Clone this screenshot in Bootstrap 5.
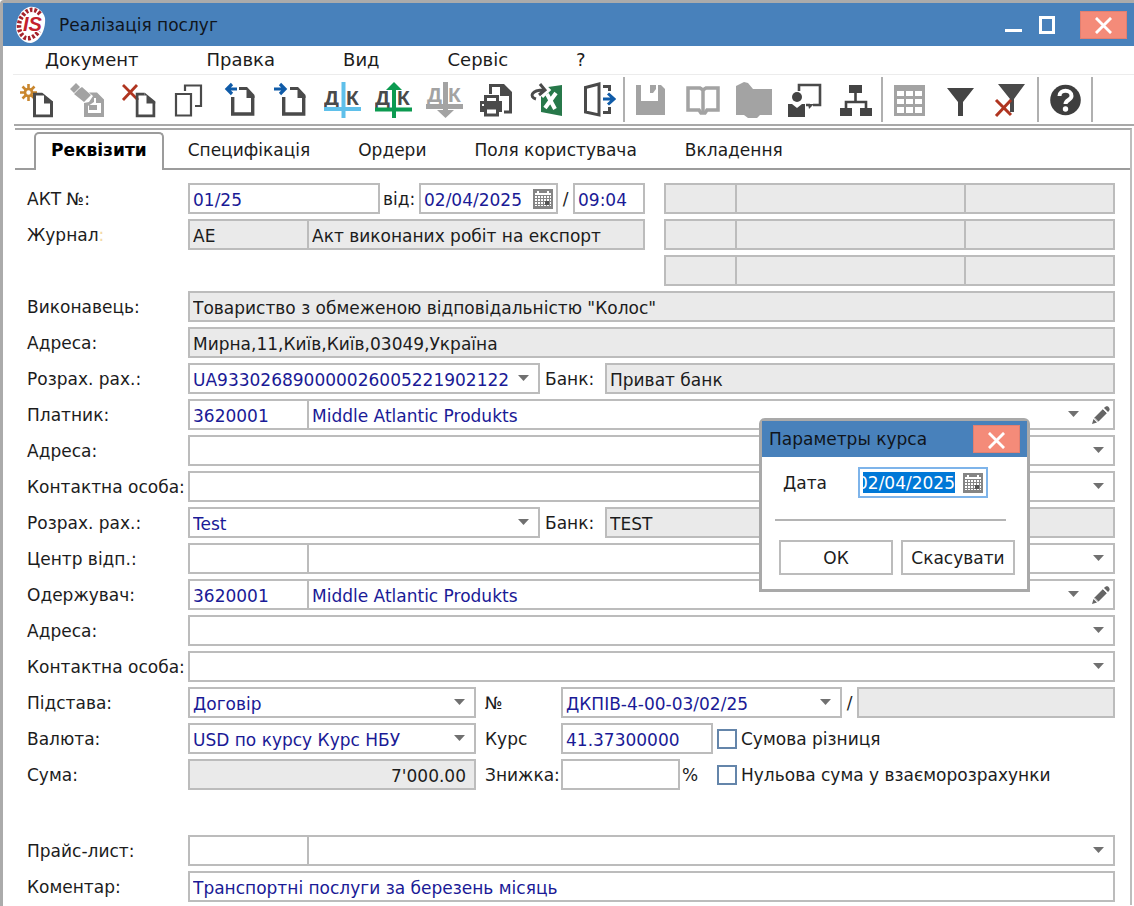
<!DOCTYPE html>
<html lang="uk">
<head>
<meta charset="utf-8">
<meta name="viewport" content="width=device-width, initial-scale=1">
<title>Реалізація послуг</title>
<link href="https://cdn.jsdelivr.net/npm/bootstrap@5.3.0/dist/css/bootstrap.min.css" rel="stylesheet">
<style>
:root { --line:#bcbcbc; --frame:#ababab; --bar:#4881bb; --ink:#1c1c1c; --entry:#1a1a96; --off:#eaeaea; }
body { font-family:"DejaVu Sans",Verdana,sans-serif; font-size:17px; line-height:20px; color:var(--ink); background:#fff; }
.win { border-left:3px solid var(--frame); border-top:3px solid var(--frame); border-top-left-radius:4px; }
.titlebar { background:var(--bar); height:43px; padding:0 7px 0 12px; color:#10151c; }
.winbtn { border:0; background:none; padding:0; width:34px; height:28px; color:#fff; }
.winclose { background:#f48b79; border:1px solid #e27f70; border-radius:0; width:47px; height:28px; padding:0; color:#fff; }
.menubar { height:29px; padding-left:32px; gap:68px; margin-left:10px; border-bottom:1px solid #ececec; font-size:18px; }
.menubar a, .tabstrip a { color:var(--ink); text-decoration:none; }
.tools { padding-left:8px; min-height:49px; }
.toolbtn { width:51px; height:46px; padding:0; border:0; background:none; border-radius:0; }
.toolbtn svg { display:block; margin:auto; }
.toolsep { width:3px; height:45px; border-left:2px solid #b0b0b0; }
.rule1 { height:2px; background:#a8a8a8; margin-left:11px; }
.panel { margin:2px 2px 0 12px; border-top:2px solid #a8a8a8; border-right:2px solid #bdbdbd; }
.tabstrip { height:40px; border-bottom:2px solid #9c9c9c; padding-left:19px; }
.tabstrip a { height:36px; padding:0 24px; }
.tabstrip a.on { font-weight:700; color:#000; border:2px solid #9c9c9c; border-bottom:0; border-radius:5px 5px 0 0; background:#fff; margin-bottom:-2px; height:38px; padding:0 15px 4px; }
.sheet { display:grid; row-gap:5px; padding:13px 15px 3px 12px; }
.line { display:flex; align-items:center; height:31px; min-width:0; }
.cap { flex:none; width:161px; white-space:nowrap; }
.fld { display:block; height:31px; min-width:0; border:2px solid var(--line); border-radius:0; background-color:#fff; color:var(--entry); padding:2px 3px 0 3px; font:inherit; line-height:20px; outline:0; }
.fld.off { background-color:var(--off); color:var(--ink); }
.second { margin-left:-2px; }
select.fld { appearance:none; padding-right:26px; background-repeat:no-repeat; background-position:right 9px center; background-image:url("data:image/svg+xml,%3Csvg xmlns='http://www.w3.org/2000/svg' width='11' height='7'%3E%3Cpath d='M0 0h11L5.500 6z' fill='%23707070'/%3E%3C/svg%3E"); }
select.fld.pen { background-position:right 34px center; padding-right:52px; }
.w-code { width:121px; flex:none; }
.w-num { width:192px; flex:none; } .w-date { width:139px; flex:none; } .w-time { width:72px; flex:none; }
.w-acc { width:352px; flex:none; } .w-base { width:288px; flex:none; } .w-doc { width:281px; flex:none; }
.w-rate { width:152px; flex:none; } .w-disc { width:119px; flex:none; } .w-left { width:457px; flex:none; }
.w-cell { width:73px; flex:none; } .w-end { width:151px; flex:none; }
.w-from { width:39px; padding-left:3px; white-space:nowrap; } .w-slash { width:15px; text-align:center; }
.triple { margin-left:19px; }
.faint { color:#f3d9a8; }
.c-bank { width:65px; padding-left:5px; } .c-mid { width:85px; padding-left:9px; }
.tail { width:37px; padding-left:2px; } .tail.none { width:4px; padding:0; }
.over { position:absolute; right:5px; top:50%; transform:translateY(-50%); border:0; background:none; padding:0; line-height:0; }
.tick { appearance:none; width:20px; height:20px; border:2px solid #6485aa; background:#fff; margin:0; flex:none; }
.dlg { position:absolute; top:415px; right:104px; width:271px; border:3px solid #a9a9a9; border-radius:6px 6px 0 0; background:#fff; z-index:5; }
.dlg-head { background:var(--bar); height:36px; padding:0 7px; color:#10151c; }
.dlg-body { padding:10px 12px 14px 13px; }
.dlg-row { padding:0 27px 0 8px; }
.dlg .pick { width:130px; border-color:#7eb4ea; padding:3px 31px 3px 3px; background:#0078d7 content-box; color:#fff; }
.pickbox { background:#fff; width:130px; }
.dlg-hr { border:0; border-top:2px solid #b4b4b4; opacity:1; margin:21px 9px 19px 0; }
.dlgbtn { width:114px; height:35px; border:2px solid var(--line); border-radius:0; background:#fff; color:var(--ink); padding:0; }
</style>
</head>
<body>
<svg width="0" height="0" class="d-none">
  <symbol id="cal" viewBox="0 0 20 20"><path fill="#858585" d="M0 0h20v20H0z"/><path fill="#fff" d="M3 4h1V2h2v2h8V2h2v2h2v2H2V4zM2 7h16v10H2z"/><path stroke="#858585" d="M2 9.500h16M2 12.500h16M2 15.500h16M4.500 7v10M7.500 7v10M10.500 7v10M13.500 7v10M16.500 7v10"/><path fill="#555" d="M12 12h4v4h-4z"/></symbol>
  <symbol id="pencil" viewBox="0 0 18 18"><path fill="#666" d="M11 3l4 4-9 9-4-4zM12 2c2-2.500 4-2 5-.5s1 3-1 4.500zM1.500 13l3.500 3.500L0 18z"/><path stroke="#fff" stroke-width=".8" d="M11 3l4 4M2.500 12l4 4"/></symbol>
  <symbol id="cross" viewBox="0 0 18 18"><path stroke="#fff" stroke-width="3" d="M1 1l16 16M17 1L1 17"/></symbol>
  <symbol id="page" viewBox="0 0 20 25"><path fill="none" stroke="currentColor" stroke-width="3" d="M9 1.500H1.500v22h17V9"/><path fill="currentColor" d="M9 0l11 9v2h-9V3H9z"/></symbol>
</svg>

<div class="win position-relative min-vh-100">
  <header class="titlebar d-flex align-items-center">
    <svg width="32" height="38" viewBox="0 0 32 38" aria-hidden="true" class="flex-shrink-0">
      <path fill="#fff" d="M14 1C22 0 28 5 30 12C31 22 26 35 16 37C7 37 1 29 1 21C2 10 7 3 14 1z"/>
      <path fill="none" stroke="#a5222b" stroke-width="4.500" stroke-dasharray="2.600 1.800" d="M25 8C21 3 14 2 9 8C3 14 2 24 8 30C12 35 20 31 24 25"/>
      <text x="8" y="25" font-family="Liberation Sans, Arial, sans-serif" font-weight="700" font-style="italic" font-size="20" fill="#c4202c" stroke="#fff" stroke-width="2" paint-order="stroke">IS</text>
    </svg>
    <span class="ms-2 me-auto ps-1">Реалізація послуг</span>
    <button class="winbtn" aria-label="Згорнути"><svg width="18" height="28"><path fill="#fff" d="M1 18h17v3H1z"/></svg></button>
    <button class="winbtn me-3" aria-label="Розгорнути"><svg width="18" height="20" viewBox="0 0 18 20"><path fill="none" stroke="#fff" stroke-width="3" d="M2.500 2.500h13v15h-13z"/></svg></button>
    <button class="winclose" aria-label="Закрити"><svg width="17" height="17"><use href="#cross"/></svg></button>
  </header>

  <nav class="menubar d-flex align-items-center">
    <a href="#">Документ</a><a href="#">Правка</a><a href="#">Вид</a><a href="#">Сервіс</a><a href="#">?</a>
  </nav>

  <div class="tools d-flex flex-wrap align-items-center" role="toolbar">
    <button class="toolbtn" aria-label="Створити"><svg width="37" height="36" viewBox="0 0 37 36" color="#4a4a4a"><g stroke="#c9872f" stroke-width="2.600" fill="none"><circle cx="10.500" cy="10.500" r="3.500"/><path d="M10.500 2v5M10.500 14v5M2 10.500h5M14 10.500h5M4.500 4.500l3.500 3.500M13 13l3.500 3.500M16.500 4.500L13 8M8 13l-3.500 3.500"/></g><use href="#page" x="15" y="10.500" width="20" height="25"/></svg></button>
    <button class="toolbtn" aria-label="Змінити"><svg width="37" height="36" viewBox="0 0 37 36"><path fill="#a3a3a3" d="M7 1l4 4-6 6-4-4zM10 7l3-2 9 8-7 7L5 12zM20 10.500h8l7 7v17.500H15V21l5-1 4-6z"/><path fill="#fff" d="M19 24l6-4v-4h2v5h5v10H19z"/><path fill="#a3a3a3" d="M20 23h8v5h-8z"/></svg></button>
    <button class="toolbtn" aria-label="Видалити"><svg width="37" height="36" viewBox="0 0 37 36" color="#4a4a4a"><path stroke="#b03520" stroke-width="2.800" d="M3 18L17 3M3 3l15 15"/><use href="#page" x="15.500" y="10.500" width="20" height="25"/></svg></button>
    <button class="toolbtn" aria-label="Копіювати"><svg width="37" height="36" viewBox="0 0 37 36" fill="none" stroke="#4a4a4a" stroke-width="2.200"><path d="M5 12h15v21.500H5zM14 9V3.500h16V24h-6"/></svg></button>
    <button class="toolbtn" aria-label="Попередній"><svg width="37" height="36" viewBox="0 0 37 36" color="#4a4a4a"><path fill="none" stroke="currentColor" stroke-width="3.400" d="M10.700 15v17h20V14"/><path fill="currentColor" d="M17 5h8l7.500 8v3h-8V8H17z"/><path fill="none" stroke="#0f5ba8" stroke-width="3.200" d="M15 7H6M10 2L5 7l5 5"/></svg></button>
    <button class="toolbtn" aria-label="Наступний"><svg width="37" height="36" viewBox="0 0 37 36" color="#4a4a4a"><path fill="none" stroke="currentColor" stroke-width="3.400" d="M10.700 15v17h20V14"/><path fill="currentColor" d="M17 5h8l7.500 8v3h-8V8H17z"/><path fill="none" stroke="#0f5ba8" stroke-width="3.200" d="M1 7h10M7 2l5 5-5 5"/></svg></button>
    <button class="toolbtn" aria-label="Проводка"><svg width="37" height="36" viewBox="0 0 37 36" font-family="Liberation Sans, Arial, sans-serif" font-weight="700" font-size="21" fill="#4a4a4a"><text x="0" y="23">Д</text><text x="22" y="23">К</text><path stroke="#5fc0ea" stroke-width="4" d="M19.500 0v36M0 27h37"/></svg></button>
    <button class="toolbtn" aria-label="Провести"><svg width="37" height="36" viewBox="0 0 37 36" font-family="Liberation Sans, Arial, sans-serif" font-weight="700" font-size="21" fill="#4a4a4a"><text x="0" y="23">Д</text><text x="22" y="23">К</text><path stroke="#0c9a50" stroke-width="4" d="M19 3v33M0 27.500h37"/><path fill="#0c9a50" d="M19 0l8 8H11z"/></svg></button>
    <button class="toolbtn" aria-label="Відкликати"><svg width="37" height="36" viewBox="0 0 37 36" font-family="Liberation Sans, Arial, sans-serif" font-weight="700" font-size="21" fill="#a3a3a3"><text x="1" y="20">Д</text><text x="22" y="20">К</text><path stroke="#a3a3a3" stroke-width="5" d="M19.500 0v30M0 24.500h37"/><path fill="#a3a3a3" d="M11 28h17l-8.500 8z"/></svg></button>
    <button class="toolbtn" aria-label="Друк"><svg width="37" height="36" viewBox="0 0 37 36"><path fill="none" stroke="#4a4a4a" stroke-width="3" d="M13.500 12V3.500H25M33.500 12v18H27"/><path fill="#4a4a4a" d="M23 2h4l8 8v4H23zM3 19h22v11H3z"/><path fill="#fff" stroke="#4a4a4a" stroke-width="3" d="M8.500 14.500h12v6h-12zM8.500 26h12v7h-12z"/><path fill="#fff" d="M5 22h2v2H5z"/></svg></button>
    <button class="toolbtn" aria-label="Експорт в Excel"><svg width="37" height="36" viewBox="0 0 37 36"><path fill="#27784a" d="M13 6l21-3v31l-21-4z"/><path fill="none" stroke="#fff" stroke-width="4" d="M19 12l8 15M28 11L17 26"/><path fill="none" stroke="#fff" stroke-width="6" d="M8 17C1 12 6 8 16 8M13 2l6 6-6 6"/><path fill="none" stroke="#4a4a4a" stroke-width="3" d="M8 17C1 15 3 8 16 8M12 2l5 6-6 5"/></svg></button>
    <button class="toolbtn" aria-label="Вийти"><svg width="37" height="36" viewBox="0 0 37 36" fill="none" stroke="#4a4a4a" stroke-width="3"><path d="M6.500 5.500L20 2v31L6.500 30zM24 4.500h6.500V9M30.500 25v5.500H24"/><path stroke="#0f5ba8" d="M24 17h10M29 11.500l6 5.500-6 5.500"/></svg></button>
    <span class="toolsep"></span>
    <button class="toolbtn" aria-label="Зберегти"><svg width="37" height="36" viewBox="0 0 37 36"><path fill="#a3a3a3" d="M3 3h5v16h17V3h3l4 4v26H3z"/><path fill="#a3a3a3" d="M17 3h6v4l-3 4h-3z"/></svg></button>
    <button class="toolbtn" aria-label="Довідник"><svg width="37" height="36" viewBox="0 0 37 36"><path fill="#fff" stroke="#a3a3a3" stroke-width="3.500" d="M4 6h12l3 2 3-2h12v22H23l-2 3h-4l-2-3H4z"/><path stroke="#a3a3a3" stroke-width="3.500" d="M19 7v24"/></svg></button>
    <button class="toolbtn" aria-label="Папка"><svg width="37" height="36" viewBox="0 0 37 36"><path fill="#a3a3a3" d="M1 4l8-4 4 1 5 6h19v26H25l-3 3h-9l-4-3H1z"/></svg></button>
    <button class="toolbtn" aria-label="Контакти"><svg width="37" height="36" viewBox="0 0 37 36"><path fill="none" stroke="#4a4a4a" stroke-width="2.600" d="M13 9V3h21v20h-7M20 23h4"/><path fill="#4a4a4a" d="M22 22h6l-5 5z"/><circle cx="11" cy="15" r="5" fill="#444"/><path fill="#444" d="M2 22h4l5 4 5-4h3v13H2z"/></svg></button>
    <button class="toolbtn" aria-label="Структура"><svg width="37" height="36" viewBox="0 0 37 36"><path fill="#444" d="M12 3h13v8H12zM3 26h12v8H3zM23 26h12v8H23z"/><path fill="none" stroke="#444" stroke-width="2.600" d="M18.500 10v9M9 27v-7h20v7"/></svg></button>
    <span class="toolsep"></span>
    <button class="toolbtn" aria-label="Таблиця"><svg width="37" height="36" viewBox="0 0 37 36"><path fill="#a3a3a3" d="M3 3h31v31H3z"/><path fill="#fff" d="M6 9h7v5H6zM15 9h7v5h-7zM24 9h7v5h-7zM6 17h7v5H6zM15 17h7v5h-7zM24 17h7v5h-7zM6 25h7v6H6zM15 25h7v6h-7zM24 25h7v6h-7z"/></svg></button>
    <button class="toolbtn" aria-label="Фільтр"><svg width="37" height="36" viewBox="0 0 37 36"><path fill="#444" d="M5 6h27L21 20v14h-5V20z"/></svg></button>
    <button class="toolbtn" aria-label="Скинути фільтр"><svg width="37" height="36" viewBox="0 0 37 36"><path fill="#4a4a4a" d="M5 2h27L21 17v13h-4V17z"/><path stroke="#b03520" stroke-width="3" d="M3 34l15-16M3 18l15 15"/></svg></button>
    <span class="toolsep"></span>
    <button class="toolbtn" aria-label="Довідка"><svg width="37" height="36" viewBox="0 0 37 36"><circle cx="18.500" cy="18" r="15.300" fill="#3e3e3e"/><path fill="none" stroke="#fff" stroke-width="4" d="M12.500 14c0-7 12-7 12 0 0 4-6 4-6 8"/><circle cx="18.500" cy="27" r="2.700" fill="#fff"/></svg></button>
    <span class="toolsep"></span>
  </div>
  <div class="rule1"></div>

  <main class="panel">
    <nav class="tabstrip d-flex align-items-end">
      <a href="#" class="on d-flex align-items-center">Реквізити</a>
      <a href="#" class="d-flex align-items-center">Специфікація</a>
      <a href="#" class="d-flex align-items-center">Ордери</a>
      <a href="#" class="d-flex align-items-center">Поля користувача</a>
      <a href="#" class="d-flex align-items-center">Вкладення</a>
    </nav>

    <form class="sheet">
      <div class="line"><label class="cap" for="num">АКТ №:</label><input id="num" class="fld w-num" value="01/25">
        <label class="w-from" for="dat">від:</label>
        <span class="position-relative"><input id="dat" class="fld w-date" value="02/04/2025"><button type="button" class="over" aria-label="Календар"><svg width="20" height="20"><use href="#cal"/></svg></button></span>
        <label for="tim" class="w-slash">/</label><input id="tim" class="fld w-time" value="09:04">
        <span class="d-flex flex-fill triple"><input class="fld off w-cell" readonly aria-label="Поле 1"><input class="fld off second flex-fill" readonly aria-label="Поле 2"><input class="fld off second w-end" readonly aria-label="Поле 3"></span>
      </div>
      <div class="line"><label class="cap" for="jr">Журнал<span class="faint">:</span></label><span class="d-flex w-left"><input id="jr" class="fld off w-code" readonly value="АЕ"><input class="fld off second flex-fill" readonly value="Акт виконаних робіт на експорт" aria-label="Назва журналу"></span>
        <span class="d-flex flex-fill triple"><input class="fld off w-cell" readonly aria-label="Поле 4"><input class="fld off second flex-fill" readonly aria-label="Поле 5"><input class="fld off second w-end" readonly aria-label="Поле 6"></span>
      </div>
      <div class="line"><span class="cap"></span><span class="w-left"></span>
        <span class="d-flex flex-fill triple"><input class="fld off w-cell" readonly aria-label="Поле 7"><input class="fld off second flex-fill" readonly aria-label="Поле 8"><input class="fld off second w-end" readonly aria-label="Поле 9"></span>
      </div>
      <div class="line"><label class="cap" for="vik">Виконавець:</label><input id="vik" class="fld off flex-fill" readonly value='Товариство з обмеженою відповідальністю "Колос"'></div>
      <div class="line"><label class="cap" for="adr">Адреса:</label><input id="adr" class="fld off flex-fill" readonly value="Мирна,11,Київ,Київ,03049,Україна"></div>
      <div class="line"><label class="cap" for="rr">Розрах. рах.:</label><select id="rr" class="fld w-acc"><option>UA933026890000026005221902122</option></select><label class="cap c-bank" for="bk">Банк:</label><input id="bk" class="fld off flex-fill" readonly value="Приват банк"></div>
      <div class="line"><label class="cap" for="pl">Платник:</label><input id="pl" class="fld w-code" value="3620001"><span class="position-relative flex-fill second"><select class="fld pen w-100" aria-label="Назва платника"><option>Middle Atlantic Produkts</option></select><button type="button" class="over" aria-label="Редагувати"><svg width="18" height="18"><use href="#pencil"/></svg></button></span></div>
      <div class="line"><label class="cap" for="ad2">Адреса:</label><select id="ad2" class="fld flex-fill"><option></option></select></div>
      <div class="line"><label class="cap" for="ko1">Контактна особа:</label><select id="ko1" class="fld flex-fill"><option></option></select></div>
      <div class="line"><label class="cap" for="rr2">Розрах. рах.:</label><select id="rr2" class="fld w-acc"><option>Test</option></select><label class="cap c-bank" for="bk2">Банк:</label><input id="bk2" class="fld off flex-fill" readonly value="TEST"></div>
      <div class="line"><label class="cap" for="cv">Центр відп.:</label><input id="cv" class="fld w-code"><select class="fld second flex-fill" aria-label="Назва центру"><option></option></select></div>
      <div class="line"><label class="cap" for="od">Одержувач:</label><input id="od" class="fld w-code" value="3620001"><span class="position-relative flex-fill second"><select class="fld pen w-100" aria-label="Назва одержувача"><option>Middle Atlantic Produkts</option></select><button type="button" class="over" aria-label="Редагувати"><svg width="18" height="18"><use href="#pencil"/></svg></button></span></div>
      <div class="line"><label class="cap" for="ad3">Адреса:</label><select id="ad3" class="fld flex-fill"><option></option></select></div>
      <div class="line"><label class="cap" for="ko2">Контактна особа:</label><select id="ko2" class="fld flex-fill"><option></option></select></div>
      <div class="line"><label class="cap" for="ps">Підстава:</label><select id="ps" class="fld w-base"><option>Договір</option></select><label class="cap c-mid" for="dn">№</label><select id="dn" class="fld w-doc"><option>ДКПІВ-4-00-03/02/25</option></select><label for="dn2" class="w-slash">/</label><input id="dn2" class="fld off flex-fill" readonly></div>
      <div class="line"><label class="cap" for="va">Валюта:</label><select id="va" class="fld w-base"><option>USD по курсу Курс НБУ</option></select><label class="cap c-mid" for="ku">Курс</label><input id="ku" class="fld w-rate" value="41.37300000"><span class="tail none"></span><input type="checkbox" class="tick" id="t1"><label for="t1" class="ps-1">Сумова різниця</label></div>
      <div class="line"><label class="cap" for="su">Сума:</label><input id="su" class="fld off w-base text-end pe-2" readonly value="7'000.00"><label class="cap c-mid" for="zn">Знижка:</label><input id="zn" class="fld w-disc"><span class="tail">%</span><input type="checkbox" class="tick" id="t2"><label for="t2" class="ps-1">Нульова сума у взаєморозрахунки</label></div>
      <div class="line mt-4 pt-3 h-auto"><label class="cap" for="pr">Прайс-лист:</label><input id="pr" class="fld w-code"><select class="fld second flex-fill" aria-label="Назва прайс-листа"><option></option></select></div>
      <div class="line"><label class="cap" for="km">Коментар:</label><input id="km" class="fld flex-fill" value="Транспортні послуги за березень місяць"></div>
    </form>
  </main>

  <section class="dlg" role="dialog" aria-labelledby="dt">
    <div class="dlg-head d-flex align-items-center justify-content-between"><span id="dt">Параметры курса</span><button class="winclose" aria-label="Закрити"><svg width="17" height="17"><use href="#cross"/></svg></button></div>
    <div class="dlg-body">
      <div class="dlg-row d-flex align-items-center justify-content-between"><label for="dd">Дата</label><span class="position-relative pickbox"><input id="dd" class="fld pick" value="02/04/2025"><button type="button" class="over" aria-label="Календар"><svg width="20" height="20"><use href="#cal"/></svg></button></span></div>
      <hr class="dlg-hr">
      <div class="d-flex justify-content-between ps-1"><button class="dlgbtn">ОК</button><button class="dlgbtn">Скасувати</button></div>
    </div>
  </section>
</div>
<script src="https://cdn.jsdelivr.net/npm/bootstrap@5.3.0/dist/js/bootstrap.bundle.min.js"></script>
<script>
// keep the end of the date in view
const dd = document.getElementById('dd'); dd.scrollLeft = dd.scrollWidth;
</script>
</body>
</html>
